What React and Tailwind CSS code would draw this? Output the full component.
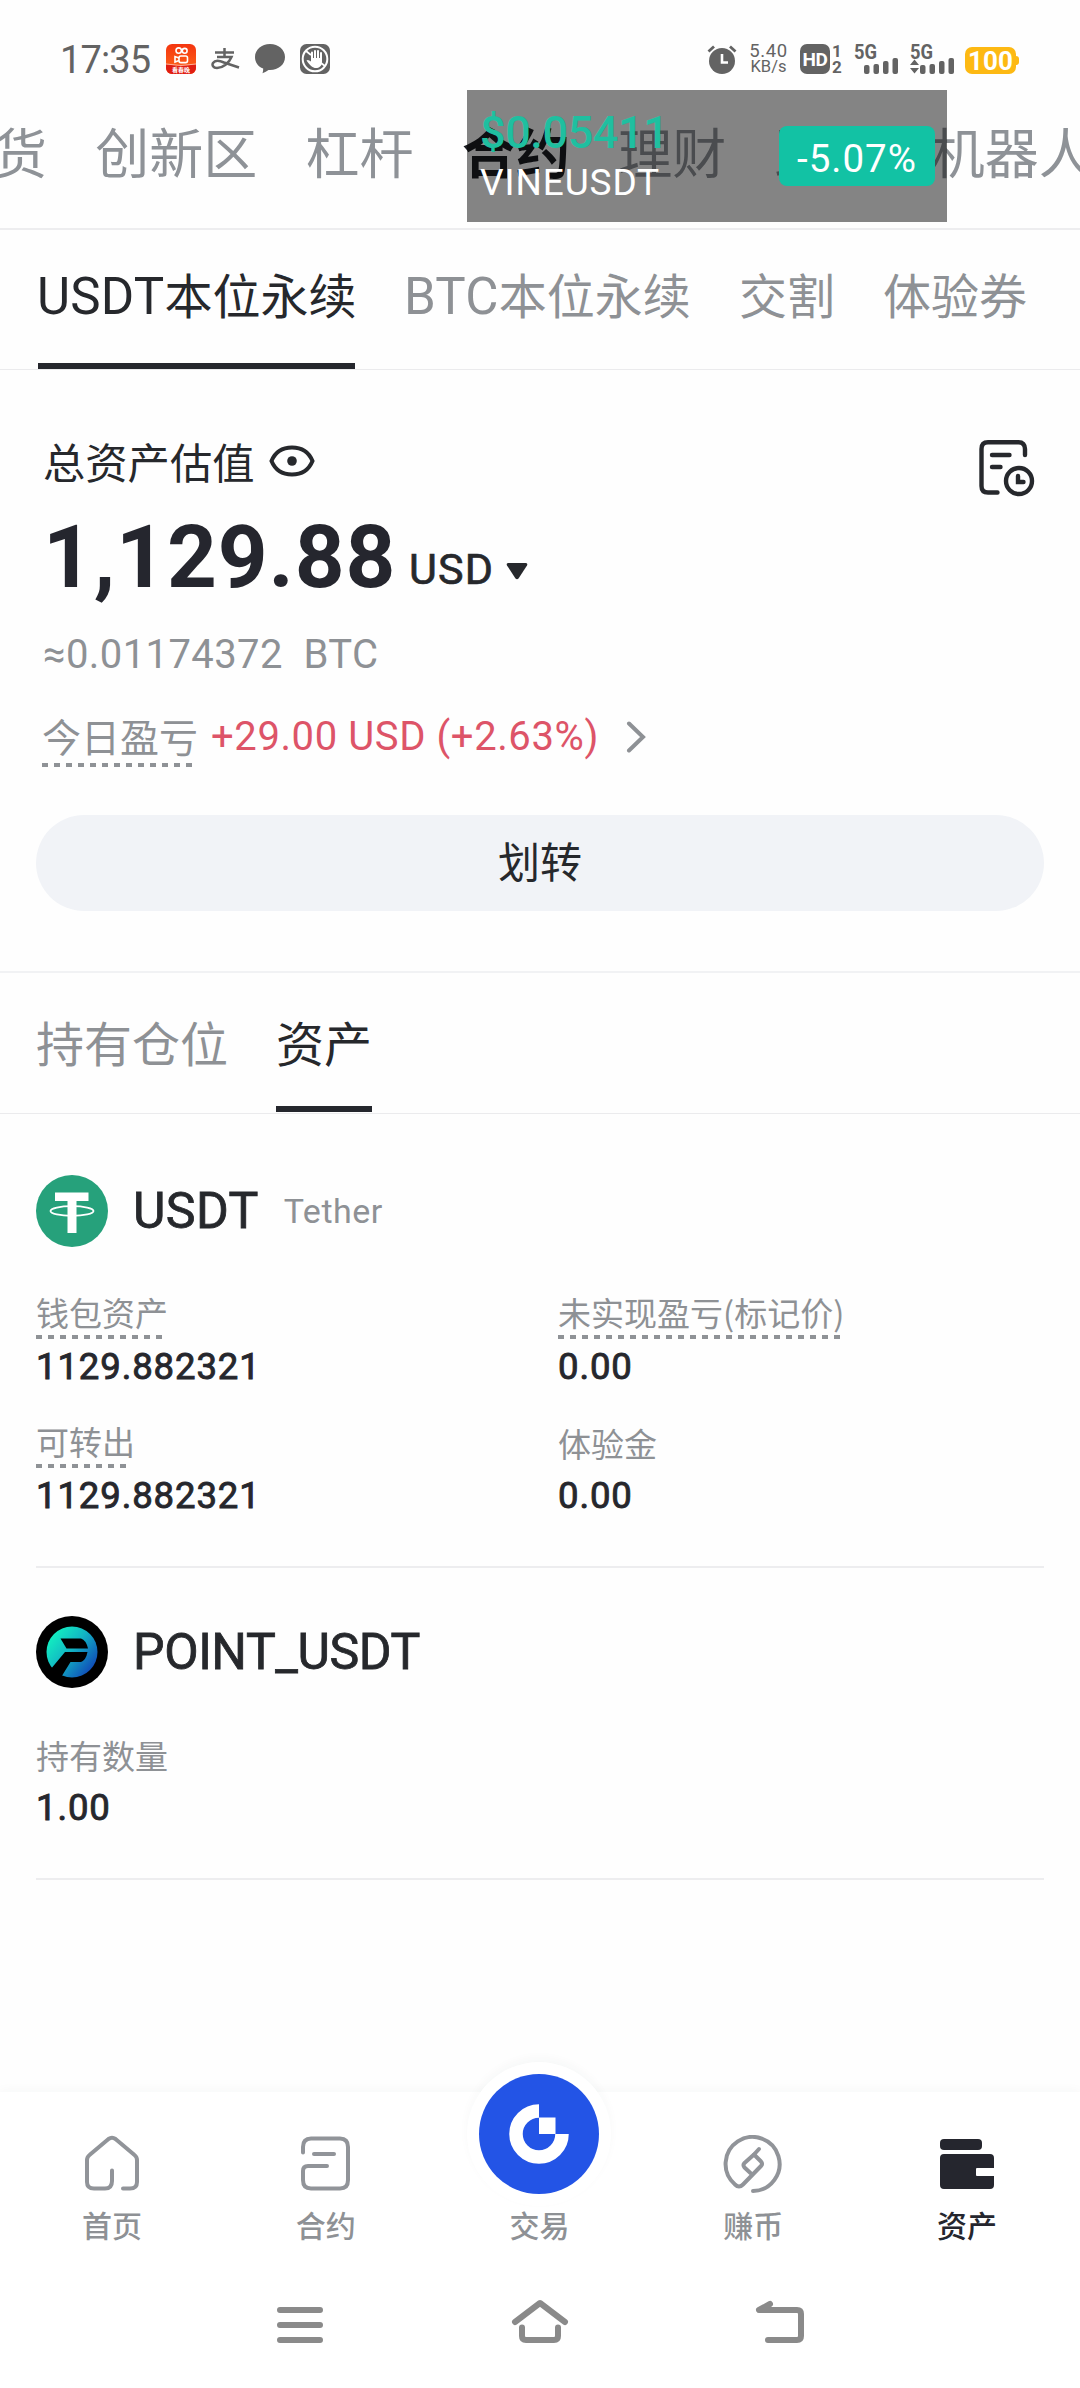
import React from "react";

const topTabs = ["货", "创新区", "杠杆", "合约", "理财", "跟单", "机器人"];

const contractTabs = [
  { coin: "USDT", label: "本位永续", width: "w-[318px]", active: true },
  { coin: "BTC", label: "本位永续", width: "w-[285px]" },
  { label: "交割", width: "w-[95px]" },
  { label: "体验券", width: "w-[144px]" },
];

const KuaishouIcon = () => (
  <svg width="30" height="30" viewBox="0 0 30 30">
    <defs>
      <linearGradient id="ks" x1="0" y1="0" x2="0" y2="1">
        <stop offset="0" stopColor="#f4350f" />
        <stop offset="1" stopColor="#ff6a1a" />
      </linearGradient>
    </defs>
    <rect width="30" height="30" rx="6" fill="url(#ks)" />
    <path d="M0 20 Q15 23 30 20 V24 a6 6 0 0 1 -6 6 H6 a6 6 0 0 1 -6 -6Z" fill="#e01d12" />
    <path d="M0 20 Q15 23 30 20" stroke="#ffb199" fill="none" />
    <g fill="none" stroke="#fff" strokeWidth="1.6">
      <circle cx="12.7" cy="6.6" r="2.7" />
      <circle cx="18.7" cy="6.8" r="2.4" />
      <rect x="13" y="12" width="8.5" height="6.6" rx="1.8" />
      <path d="M13 14 L9 12.6 V18 L13 16.6" />
    </g>
    <text x="15" y="28" textAnchor="middle" fontSize="6" fontWeight="700" fill="#fff">
      看春晚
    </text>
  </svg>
);

const AlipayIcon = () => (
  <svg width="29" height="22" viewBox="0 0 29 22" fill="none" stroke="#636363" strokeWidth="2.5">
    <path d="M4 4.5 H23 M13.5 0 V9 M6 9 H20.5 C18 15 12 20 6 20 C2 20 0.8 17 2 15 C4 12 8.5 12.5 13 14.5 L28 19.5" />
  </svg>
);

const BubbleIcon = () => (
  <svg width="30" height="30" viewBox="0 0 30 30" fill="#636363">
    <path d="M15 0 C23.5 0 30 5.8 30 13 C30 20.5 23.5 26 15 26 L13.5 26 Q11 28 7.5 29.3 Q8.3 27 8.2 24.5 C3 22.5 0 18.5 0 13 C0 5.8 6.5 0 15 0Z" />
  </svg>
);

const HandIcon = () => (
  <svg width="30" height="30" viewBox="0 0 30 30">
    <rect width="30" height="30" rx="6.5" fill="#636363" />
    <circle cx="15" cy="15" r="12.3" fill="none" stroke="#fff" strokeWidth="2" />
    <path
      d="M12 16 V8.5 M15 14 V7 M18 14 V7 M21 15 V9"
      stroke="#fff"
      strokeWidth="2"
      strokeLinecap="round"
    />
    <path d="M11 14 H22 V18 C22 22 19 24 16 24 C12.5 24 10.5 22 6.5 16.5 Q8 15 11 17.5Z" fill="#fff" />
    <path d="M6 7 L11 11 M21 19 L25 22" stroke="#fff" strokeWidth="1.8" />
  </svg>
);

const AlarmIcon = () => (
  <svg width="30" height="30" viewBox="0 0 30 30">
    <circle cx="15" cy="17" r="13" fill="#636363" />
    <path d="M1.5 7.5 L7 2.5 M28.5 7.5 L23 2.5" stroke="#636363" strokeWidth="2.8" />
    <path d="M15 10 V18.5 H21" stroke="#fff" strokeWidth="2.6" fill="none" />
  </svg>
);

const Signal = ({ arrows }) => (
  <svg className="overflow-visible" width="46" height="30" viewBox="0 0 46 30" fill="#636363">
    <text x="0" y="14.5" fontSize="20" fontWeight="700" textLength="23" lengthAdjust="spacingAndGlyphs">
      5G
    </text>
    {arrows && <path d="M4.5 15.5 L9 21 H0Z M4.5 29.5 L9 24 H0Z" />}
    <rect x="10" y="21" width="5.5" height="9" rx="2" />
    <rect x="19.5" y="20" width="5.5" height="10" rx="2" />
    <rect x="29" y="17" width="5.5" height="13" rx="2" />
    <rect x="38.5" y="14" width="5.5" height="16" rx="2" />
  </svg>
);

const StatusBar = () => (
  <header className="flex h-[90px] items-start pl-[60px] pr-[61px] pt-[44px] font-[Roboto,'Noto_Sans_CJK_SC',sans-serif] text-[#636363]">
    <div className="h-[30px] w-[106px] text-[38px] leading-[32px] tracking-[-0.9px]">17:35</div>
    <div className="flex h-[30px] items-center gap-[15px]">
      <KuaishouIcon />
      <AlipayIcon />
      <BubbleIcon />
      <HandIcon />
    </div>
    <div className="ml-auto flex h-[30px] items-center">
      <AlarmIcon />
      <div className="ml-[12px] w-[39px] text-center text-[18.5px] leading-[16px] tracking-[0.6px]">
        <div>5.40</div>
        <div className="text-[16.5px] tracking-normal">KB/s</div>
      </div>
      <div className="ml-[12px] flex h-[30px] w-[30px] items-center justify-center rounded-[7px] bg-[#636363] text-[19px] font-bold leading-none tracking-[-0.5px] text-white">
        HD
      </div>
      <div className="ml-[2px] w-[11px] text-[17px] font-bold leading-[16px]">
        <div>1</div>
        <div>2</div>
      </div>
      <div className="ml-[11px]">
        <Signal />
      </div>
      <div className="ml-[10px]">
        <Signal arrows />
      </div>
      <div className="ml-[9px] mt-[3px] flex h-[27px] w-[51px] items-center justify-center rounded-[7px] bg-[#fdb913] text-[26px] font-bold leading-none text-white">
        100
      </div>
      <div className="mt-[3px] h-[9px] w-[3px] rounded-r-sm bg-[#fdb913]" />
    </div>
  </header>
);

const PriceWidget = () => (
  <div className="absolute left-[467px] top-[90px] flex h-[132px] w-[480px] bg-black/48 font-[Roboto,sans-serif]">
    <div className="w-[312px] pl-[13px] pt-[16px]">
      <div className="h-[52px] text-[45px] font-medium leading-[54px] tracking-[-0.4px] text-[#1fbfa0]">$0.05411</div>
      <div className="h-[44px] text-[37px] leading-[49px] tracking-[0.9px] text-white">VINEUSDT</div>
    </div>
    <div className="mt-[36px] h-[60px] w-[156px] rounded-lg bg-[#12c2a4] text-center text-[38.5px] leading-[66px] tracking-[1px] text-white">
      -5.07%
    </div>
  </div>
);

const EyeIcon = () => (
  <svg width="46" height="32" viewBox="0 0 46 32" fill="none" stroke="#26282c" strokeWidth="4">
    <path d="M2.5 16 C6 7.5 13.5 2.5 23 2.5 C32.5 2.5 40 7.5 43.5 16 C40 24.5 32.5 29.5 23 29.5 C13.5 29.5 6 24.5 2.5 16Z" />
    <circle cx="23" cy="16" r="4.8" fill="#26282c" stroke="none" />
  </svg>
);

const HistoryIcon = () => (
  <svg width="56" height="57" viewBox="0 0 56 57" fill="none" stroke="#26282c" strokeWidth="4.4" strokeLinecap="round">
    <path d="M46 15 V9 Q46 2.3 39.5 2.3 H9 Q2.5 2.3 2.5 9 V46 Q2.5 52.5 9 52.5 H18.5" />
    <path d="M13 15 H30.5 M13 27 H21.5" />
    <circle cx="40" cy="41" r="13" />
    <path d="M39 36 V42 H44.5" />
  </svg>
);

const Dots = ({ className }) => (
  <span
    className={`${className} block bg-[repeating-linear-gradient(90deg,#8f9296_0_6px,transparent_6px_12px)]`}
  />
);

const DottedLabel = ({ children }) => (
  <span className="inline-flex h-[46px] flex-col text-[33px] leading-[38px]">
    {children}
    <Dots className="mr-[4px] mt-auto h-[4px]" />
  </span>
);

const Field = ({ label, value, dotted }) => (
  <div className="flex h-[129px] flex-col">
    <div className="h-[47px] text-[33px] leading-[38px] text-[#8e9195]">
      {dotted ? <DottedLabel>{label}</DottedLabel> : <div className="pt-[2px]">{label}</div>}
    </div>
    <div className="mt-[2px] h-[50px] font-[Roboto,sans-serif] text-[36.5px] leading-[50px] tracking-[0.9px] text-[#26272d] [-webkit-text-stroke:0.9px_#26272d]">
      {value}
    </div>
  </div>
);

const TetherLogo = () => (
  <svg width="72" height="72" viewBox="0 0 72 72">
    <circle cx="36" cy="36" r="36" fill="#26a17b" />
    <path d="M19 17.5 H52.5 V26 H40.5 V58 H31.5 V26 H19Z" fill="#fff" />
    <ellipse cx="36" cy="36" rx="21.5" ry="4.8" fill="none" stroke="#fff" strokeWidth="1.8" />
  </svg>
);

const PointLogo = () => (
  <svg width="72" height="72" viewBox="0 0 72 72">
    <defs>
      <linearGradient id="pt" x1="0.1" y1="0.2" x2="0.9" y2="0.85">
        <stop offset="0" stopColor="#12ecc0" />
        <stop offset="0.45" stopColor="#12b5c4" />
        <stop offset="1" stopColor="#1049b8" />
      </linearGradient>
    </defs>
    <circle cx="36" cy="36" r="36" fill="#000" />
    <circle cx="36" cy="36" r="25.5" fill="url(#pt)" />
    <path d="M24.5 22.5 H45 Q50 24 52 32.5 H30.5Z" fill="#000" />
    <path d="M29 36 H51.5 Q50 44 45 46 H34.5 L24 63 L14 54Z" fill="#000" />
  </svg>
);

const HomeIcon = () => (
  <svg width="56" height="56" viewBox="0 0 56 56" fill="none" stroke="#919499" strokeWidth="4" strokeLinecap="round" strokeLinejoin="round">
    <path d="M28 35.5 V46 Q28 53.5 21 53.5 H10 Q3 53.5 3 47 V25 Q3 22 5.5 20 L24.5 4 Q28 1.5 31.5 4 L50.5 20 Q53 22 53 25 V47 Q53 53.5 46 53.5 H39" />
  </svg>
);

const ContractIcon = () => (
  <svg width="56" height="56" viewBox="0 0 56 56" fill="none" stroke="#919499" strokeWidth="4" strokeLinecap="round" strokeLinejoin="round">
    <path d="M5 17.5 V12 Q5 3.5 13 3.5 H42 Q50 3.5 50 12 V45 Q50 53.5 42 53.5 H13 Q5 53.5 5 45 V36 Q5 31 10 31 H29" />
    <path d="M16 19 H36" />
  </svg>
);

const EarnIcon = () => (
  <svg width="60" height="60" viewBox="0 0 60 60" fill="none" stroke="#919499" strokeWidth="4" strokeLinecap="round" strokeLinejoin="round">
    <path d="M30 56 A27 27 0 1 0 12 49.5 Q16 53.5 20 49.5 L38 31 Q40 29 38 26.5 L31 19.5 L21.5 28 Q19.5 30 21.5 32.5 L28.5 39" />
    <path d="M31 19.5 L36 14" />
  </svg>
);

const WalletIcon = () => (
  <svg width="56" height="56" viewBox="0 0 56 56" fill="#25262e">
    <rect x="1" y="4" width="42" height="11" rx="4" />
    <path d="M5 19 H51 Q55 19 55 23 V33 H38 Q37 33 37 34 V40 Q37 41 38 41 H55 V50 Q55 54 51 54 H5 Q1 54 1 50 V23 Q1 19 5 19Z" />
  </svg>
);

const TradeIcon = () => (
  <svg width="120" height="120" viewBox="0 0 120 120">
    <circle cx="60" cy="60" r="60" fill="#2354e6" />
    <path d="M60 37 A23 23 0 1 0 83 60" fill="none" stroke="#fff" strokeWidth="13.5" />
    <rect x="60" y="43.5" width="16.5" height="16.5" fill="#fff" />
  </svg>
);

const navItems = [
  { label: "首页", icon: <HomeIcon /> },
  { label: "合约", icon: <ContractIcon /> },
  { label: "交易" },
  { label: "赚币", icon: <EarnIcon /> },
  { label: "资产", icon: <WalletIcon />, active: true },
];

const BottomNav = () => (
  <nav className="flex h-[184px] bg-white pl-[5px] pr-[6px] shadow-[0_-2px_10px_rgba(40,50,70,0.03)]">
    {navItems.map((item) => (
      <div key={item.label} className="flex flex-1 flex-col items-center">
        <div className="flex h-[108px] items-end justify-center">
          {item.icon ? (
            <div className="flex h-[65px] items-start">{item.icon}</div>
          ) : (
            <div className="mb-[6px] rounded-full bg-white shadow-[0_0_0_12px_white,0_-4px_10px_12px_rgba(40,50,70,0.03)]">
              <TradeIcon />
            </div>
          )}
        </div>
        <div
          className={`mt-[4px] h-[40px] text-[30px] font-medium leading-[40px] ${
            item.active ? "text-[#25262e]" : "text-[#8e9195]"
          }`}
        >
          {item.label}
        </div>
      </div>
    ))}
  </nav>
);

const SystemNav = () => (
  <div className="flex h-[112px] items-start justify-center bg-white pt-[20px]">
    <svg width="240" height="56" viewBox="0 0 240 56" fill="none" stroke="#8a8a8a" strokeWidth="6" strokeLinecap="round">
      <path d="M100 14 H140 M100 29 H140 M100 44 H140" />
    </svg>
    <svg width="240" height="56" viewBox="0 0 240 56" fill="none" stroke="#8a8a8a" strokeWidth="6" strokeLinecap="round" strokeLinejoin="round">
      <path d="M95 26 L120 7 L145 26 M102 31.5 V40 Q102 44 106 44 H134 Q138 44 138 40 V31.5" />
    </svg>
    <svg width="240" height="56" viewBox="0 0 240 56" fill="none" stroke="#8a8a8a" strokeWidth="6" strokeLinecap="round" strokeLinejoin="round">
      <path d="M110 8 L99 14 H137 Q141 14 141 18 V40 Q141 44 137 44 H108" />
    </svg>
  </div>
);

const App = () => {
  return (
    <div className="relative flex h-[2388px] w-[1080px] flex-col overflow-hidden bg-[#fefefe] font-['Noto_Sans_CJK_SC',sans-serif] text-[#26282c]">
      <StatusBar />

      {/* Account type tabs, scrolled sideways */}
      <div className="flex h-[140px] items-center gap-[48.3px] overflow-hidden border-b-2 border-[#ededef] pb-[17px]">
        {topTabs.map((tab) => (
          <div
            key={tab}
            className={`shrink-0 whitespace-nowrap text-[54px] leading-[60px] first:-ml-[7px] ${
              tab === "合约" ? "font-bold text-[#1b1d22]" : "text-[#8e9297]"
            }`}
          >
            {tab}
          </div>
        ))}
      </div>
      <PriceWidget />

      <div className="flex h-[140px] gap-[49px] border-b border-[#ebebed] pl-[38px]">
        {contractTabs.map((tab) => (
          <div
            key={tab.label + tab.width}
            className={`${tab.width} flex shrink-0 flex-col whitespace-nowrap pt-[33px] text-[48px] leading-[60px] ${
              tab.active ? "text-[#26282c]" : "text-[#8e9195]"
            }`}
          >
            <div className="flex items-baseline">
              {tab.coin && (
                <span className="-ml-px font-[Roboto,sans-serif] text-[51px] leading-none tracking-[0.2px]">
                  {tab.coin}
                </span>
              )}
              {tab.label}
            </div>
            {tab.active && <div className="mt-auto h-[6px] w-[317px] bg-[#25272d]" />}
          </div>
        ))}
      </div>

      {/* Balance summary */}
      <section className="flex h-[603px] flex-col border-b-2 border-[#f1f2f4] px-[36px] pt-[61px]">
        <div className="flex h-[64px] items-start justify-between">
          <div className="flex items-center pl-[7px] text-[42.3px] leading-[60px]">
            总资产估值
            <div className="ml-[14px]">
              <EyeIcon />
            </div>
          </div>
          <div className="mr-[9px] mt-[9px]">
            <HistoryIcon />
          </div>
        </div>
        <div className="flex h-[118px] items-baseline pl-[7px] font-[Roboto,sans-serif]">
          <div className="w-[366px] text-[87px] font-bold leading-[125px] tracking-[0.9px] text-[#25262e]">
            1,129.88
          </div>
          <div className="relative -top-[3px] w-[97px] text-[43px] tracking-[1.2px] [-webkit-text-stroke:0.7px_#26282c]">
            USD
          </div>
          <svg className="mt-[68px] self-start" width="22" height="17" viewBox="0 0 22 17" fill="#26282c">
            <path d="M2 0 H20 Q22 0.5 21 2.5 L12.5 15.5 Q11 17 9.5 15.5 L1 2.5 Q0 0.5 2 0Z" />
          </svg>
        </div>
        <div className="h-[84px] whitespace-pre pl-[7px] font-[Roboto,sans-serif] text-[40px] leading-[84px] tracking-[0.4px] text-[#8e9195]">
          ≈0.01174372  BTC
        </div>
        <div className="flex h-[118px] items-start pl-[6px]">
          <div className="mt-[10px] h-[60px] w-[154px] whitespace-nowrap text-[39px] leading-[56px] text-[#8e9195]">
            <div className="h-[56px]">今日盈亏</div>
            <Dots className="h-[4px]" />
          </div>
          <div className="ml-[15px] mt-[10px] w-[415px] font-[Roboto,sans-serif] text-[40px] leading-[60px] tracking-[0.6px] text-[#dd5468]">
            +29.00 USD (+2.63%)
          </div>
          <svg className="mt-[24px]" width="20" height="32" viewBox="0 0 20 32" fill="none" stroke="#8e9195" strokeWidth="4" strokeLinecap="round">
            <path d="M3 2.5 L17 16 L3 29.5" />
          </svg>
        </div>
        <button className="h-[96px] shrink-0 rounded-full bg-[#f1f3f7] pb-[6px] text-[42px] leading-[88px]">划转</button>
      </section>

      <div className="flex h-[141px] gap-[48px] border-b border-[#ebebed] pl-[36px] text-[48px] leading-[60px]">
        <div className="w-[192px] pt-[38px] text-[#8e9195]">持有仓位</div>
        <div className="flex w-[96px] flex-col pt-[38px]">
          资产
          <div className="mb-px mt-auto h-[6px] bg-[#25272d]" />
        </div>
      </div>

      {/* Asset list */}
      <main className="px-[36px]">
        <section className="h-[454px] border-b-2 border-[#ededef] pt-[61px]">
          <div className="flex h-[72px] items-center font-[Roboto,sans-serif]">
            <TetherLogo />
            <div className="ml-[25px] text-[50px] leading-[74px] tracking-[0.4px] [-webkit-text-stroke:0.8px_#26282c]">
              USDT
            </div>
            <div className="ml-[25px] text-[34px] leading-[72px] tracking-[0.5px] text-[#8e9195]">Tether</div>
          </div>
          <div className="mt-[46px] grid grid-cols-[522px_1fr]">
            <Field label="钱包资产" value="1129.882321" dotted />
            <Field label="未实现盈亏(标记价)" value="0.00" dotted />
            <Field label="可转出" value="1129.882321" dotted />
            <Field label="体验金" value="0.00" />
          </div>
        </section>
        <section className="h-[312px] border-b-2 border-[#ededef] pt-[48px]">
          <div className="flex h-[72px] items-center font-[Roboto,sans-serif]">
            <PointLogo />
            <div className="ml-[25px] text-[50px] leading-[74px] tracking-[-0.4px] [-webkit-text-stroke:0.8px_#26282c]">
              POINT_USDT
            </div>
          </div>
          <div className="mt-[46px]">
            <Field label="持有数量" value="1.00" />
          </div>
        </section>
      </main>

      <div className="mt-auto">
        <BottomNav />
        <SystemNav />
      </div>
    </div>
  );
};

export default App;
